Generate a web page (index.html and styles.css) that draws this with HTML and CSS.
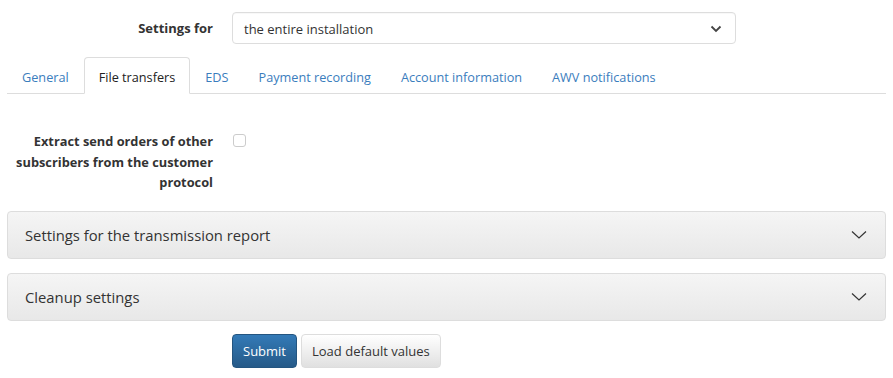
FILE: index.html
```html
<!DOCTYPE html>
<html>
<head>
<meta charset="utf-8">
<link rel="stylesheet" href="styles.css">
</head>
<body>
<div class="page">
  <div class="form-row top-row">
    <label class="label">Settings for</label>
    <div class="control">
      <div class="select">
        <span>the entire installation</span>
        <svg class="select-chev" width="12" height="8" viewBox="0 0 12 8"><path d="M1.5 1.5 L6 6 L10.5 1.5" fill="none" stroke="#444" stroke-width="1.8"/></svg>
      </div>
    </div>
  </div>
  <ul class="tabs">
    <li class="tab">General</li>
    <li class="tab active">File transfers</li>
    <li class="tab">EDS</li>
    <li class="tab">Payment recording</li>
    <li class="tab">Account information</li>
    <li class="tab">AWV notifications</li>
  </ul>
  <div class="form-row check-row">
    <label class="label">Extract send orders of other subscribers from the customer protocol</label>
    <div class="control"><span class="checkbox"></span></div>
  </div>
  <div class="panel">
    <span>Settings for the transmission report</span>
    <svg class="panel-chev" width="16" height="10" viewBox="0 0 16 10"><path d="M1 1.5 L8 8 L15 1.5" fill="none" stroke="#333" stroke-width="1.2"/></svg>
  </div>
  <div class="panel">
    <span>Cleanup settings</span>
    <svg class="panel-chev" width="16" height="10" viewBox="0 0 16 10"><path d="M1 1.5 L8 8 L15 1.5" fill="none" stroke="#333" stroke-width="1.2"/></svg>
  </div>
  <div class="form-row buttons-row">
    <div class="label"></div>
    <div class="control buttons">
      <button class="btn btn-primary">Submit</button>
      <button class="btn btn-default">Load default values</button>
    </div>
  </div>
</div>
</body>
</html>
```
FILE: styles.css
```css
* { box-sizing: border-box; }
body {
  margin: 0;
  font-family: "Open Sans", "Noto Sans", sans-serif;
  font-size: 13px;
  color: #333;
  background: #fff;
}
.page {
  padding: 12px 7px 0 7px;
}
.form-row {
  display: flex;
  align-items: flex-start;
}
.label {
  width: 206px;
  flex: none;
  text-align: right;
  font-weight: 700;
}
.control {
  margin-left: 19px;
  flex: none;
}
.top-row .label {
  padding-top: 7px;
}
.select {
  width: 504px;
  height: 32px;
  border: 1px solid #ddd;
  border-radius: 4px;
  display: flex;
  align-items: center;
  justify-content: space-between;
  padding: 1px 13px 0 11px;
  box-shadow: inset 0 1px 1px rgba(0,0,0,0.03);
}
.tabs {
  list-style: none;
  margin: 13px 0 0 0;
  padding: 0;
  display: flex;
  border-bottom: 1px solid #ddd;
}
.tab {
  padding: 10px 14px 6px 14px;
  line-height: 19px;
  font-size: 12.7px;
  color: #3a7dbd;
  border: 1px solid transparent;
  border-radius: 4px 4px 0 0;
  margin-bottom: -1px;
}
.tab.active {
  color: #222;
  border-color: #ddd;
  border-bottom-color: #fff;
  background: #fff;
}
.check-row {
  margin-top: 37px;
}
.check-row .label {
  font-size: 12.8px;
  line-height: 20.5px;
}
.checkbox {
  display: block;
  width: 13px;
  height: 13px;
  border: 1px solid #ccc;
  border-radius: 3px;
  margin-top: 3px;
  margin-left: 1px;
}
.panel {
  margin-top: 18px;
  height: 48px;
  border: 1px solid #ddd;
  border-radius: 4px;
  background: linear-gradient(to bottom, #f5f5f5 0%, #e8e8e8 100%);
  display: flex;
  align-items: center;
  justify-content: space-between;
  padding: 0 18px 0 17px;
  font-size: 14.8px;
  color: #333;
}
.panel + .panel {
  margin-top: 14px;
}
.buttons-row {
  margin-top: 13px;
}
.buttons {
  display: flex;
  gap: 4px;
}
.btn {
  font-family: inherit;
  font-size: 13px;
  height: 34px;
  padding: 0 10px;
  border-radius: 4px;
  border: 1px solid #ccc;
  cursor: pointer;
}
.btn-primary {
  color: #fff;
  background: linear-gradient(to bottom, #337ab7 0%, #265a88 100%);
  border-color: #245580;
}
.btn-default {
  color: #333;
  background: linear-gradient(to bottom, #fff 0%, #e0e0e0 100%);
  border-color: #ddd;
}
```
